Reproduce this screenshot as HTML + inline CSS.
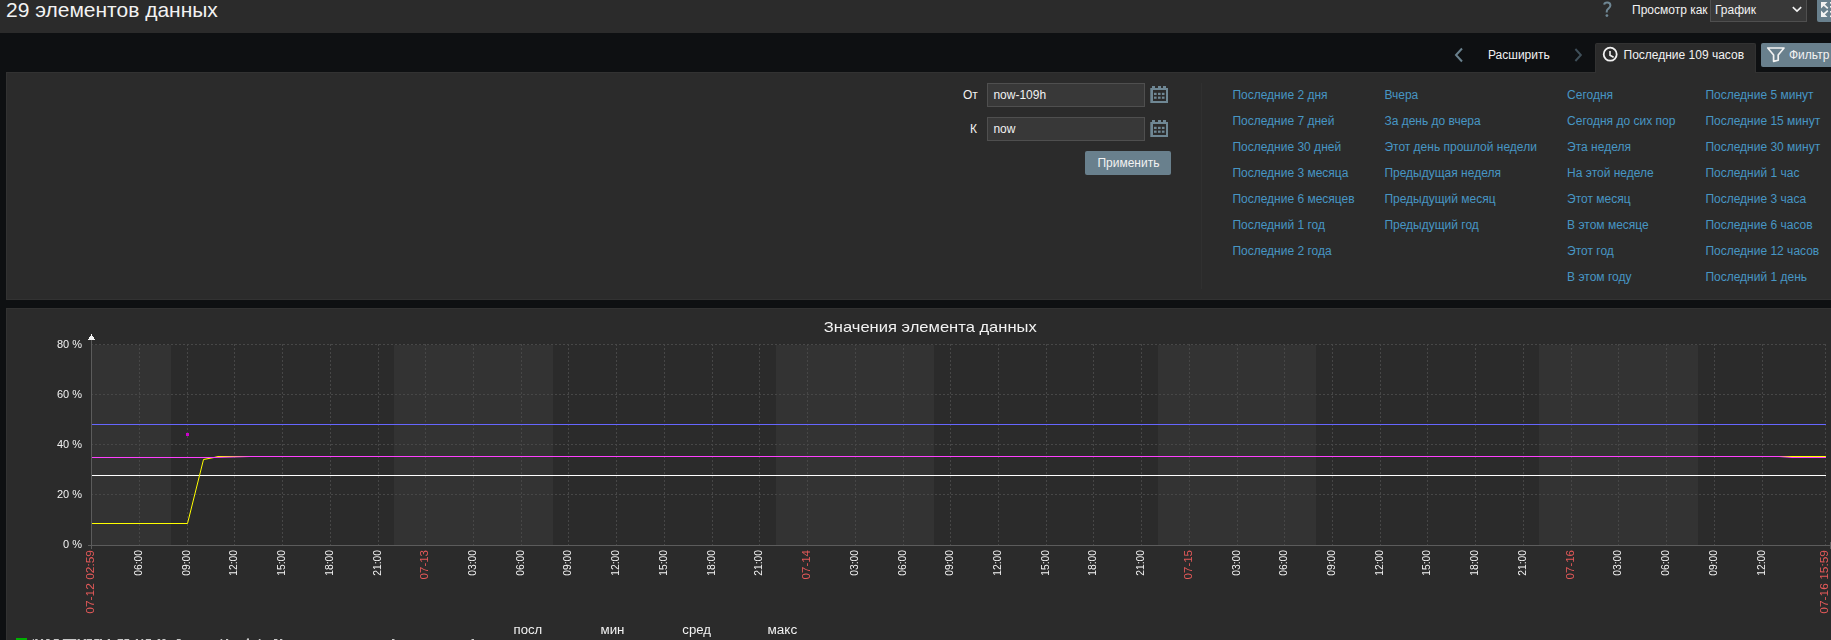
<!DOCTYPE html>
<html><head><meta charset="utf-8">
<style>
*{margin:0;padding:0;box-sizing:border-box}
html,body{width:1831px;height:640px;overflow:hidden;background:#0e1012;color:#f2f2f2;font-family:"Liberation Sans",sans-serif;font-size:12px}
.abs{position:absolute}
.t12{position:absolute;font-size:12px;line-height:14px;white-space:nowrap}
.lk{position:absolute;font-size:12px;line-height:14px;white-space:nowrap;color:#4796c4}
svg text{font-family:"Liberation Sans",sans-serif}
</style></head><body>
<div class="abs" style="left:0;top:0;width:1831px;height:33px;background:#2b2b2b"></div>
<div class="abs" style="left:6px;top:-2px;font-size:21px;line-height:24px;white-space:nowrap">29 элементов данных</div>
<!-- top right controls -->
<svg class="abs" style="left:1596px;top:0" width="20" height="20"><path d="M8.2 4.6 C8.4 3.1 9.6 2.6 11.2 2.6 C13.2 2.6 14.4 3.8 14.4 5.5 C14.4 7.6 12.2 8.4 11.1 10 C10.7 10.6 10.7 11.5 10.7 12.6" fill="none" stroke="#6f8794" stroke-width="2"/><circle cx="10.9" cy="15.6" r="1.4" fill="#6f8794"/></svg>
<div class="t12" style="left:1632px;top:3px">Просмотр как</div>
<div class="abs" style="left:1710px;top:-2px;width:97px;height:24px;background:#383838;border:1px solid #4f4f4f"></div>
<div class="t12" style="left:1715px;top:3px">График</div>
<svg class="abs" style="left:1790px;top:4px" width="14" height="12"><path d="M2.8 3.2 L7 7.2 L11.2 3.2" fill="none" stroke="#f2f2f2" stroke-width="1.6"/></svg>
<div class="abs" style="left:1817px;top:-2px;width:30px;height:24px;background:#69808d;border-radius:2px"></div>
<svg class="abs" style="left:1817px;top:0px" width="14" height="22"><path d="M4 2 H10.5 L4 8.5 Z M4 17 H10.5 L4 10.5 Z" fill="#f2f2f2"/><path d="M5.5 3.5 L10.8 8.3 M5.5 15.5 L10.8 10.7" stroke="#f2f2f2" stroke-width="1.7" fill="none"/><rect x="13" y="2" width="1" height="1.6" fill="#f2f2f2"/><rect x="13" y="6" width="1" height="1.6" fill="#f2f2f2"/><rect x="13" y="11" width="1" height="1.6" fill="#f2f2f2"/><rect x="13" y="15.5" width="1" height="1.6" fill="#f2f2f2"/></svg>
<!-- timeline nav -->
<svg class="abs" style="left:1450px;top:45px" width="20" height="20"><path d="M12 3.5 L6 10 L12 16.5" fill="none" stroke="#69808d" stroke-width="2"/></svg>
<div class="t12" style="left:1488px;top:48px">Расширить</div>
<svg class="abs" style="left:1568px;top:45px" width="20" height="20"><path d="M7.4 4 L12.9 10 L7.4 16" fill="none" stroke="#3f4f59" stroke-width="1.9"/></svg>
<div class="abs" style="left:1595px;top:43px;width:161px;height:30px;background:#2b2b2b;border:1px solid #323232;border-bottom:none;border-radius:2px 2px 0 0"></div>
<svg class="abs" style="left:1601px;top:45px" width="18" height="18"><circle cx="9.2" cy="9.2" r="6.5" fill="none" stroke="#f2f2f2" stroke-width="1.8"/><path d="M9 6 V10.2 L12.6 12.3" fill="none" stroke="#f2f2f2" stroke-width="1.6"/></svg>
<div class="t12" style="left:1623.5px;top:48px">Последние 109 часов</div>
<div class="abs" style="left:1761px;top:43px;width:90px;height:24px;background:#69808d;border-radius:2px"></div>
<svg class="abs" style="left:1765px;top:45px" width="22" height="20"><path d="M2.8 3 H19 L13.2 10 V15.2 L8.6 16.4 V10 Z" fill="none" stroke="#f2f2f2" stroke-width="1.7" stroke-linejoin="round"/></svg>
<div class="t12" style="left:1789px;top:48px">Фильтр</div>
<!-- filter container -->
<div class="abs" style="left:6px;top:72px;width:1840px;height:228px;background:#2b2b2b;border:1px solid #323232"></div>
<div class="abs" style="left:1596px;top:72px;width:159px;height:1px;background:#2b2b2b"></div>
<div class="t12" style="left:963px;top:88px">От</div>
<div class="abs" style="left:987px;top:83px;width:158px;height:24px;background:#383838;border:1px solid #4f4f4f"></div>
<div class="t12" style="left:993.4px;top:88px">now-109h</div>
<div class="t12" style="left:970px;top:122px">К</div>
<div class="abs" style="left:987px;top:117px;width:158px;height:24px;background:#383838;border:1px solid #4f4f4f"></div>
<div class="t12" style="left:993.4px;top:122px">now</div>
<svg class="abs" style="left:1150px;top:85px" width="19" height="19"><g fill="#6f8794"><rect x="2" y="1" width="3" height="2"/><rect x="8" y="1" width="3" height="2"/><rect x="13" y="1" width="3" height="2"/><path fill-rule="evenodd" d="M0.3 3 H18 V18 H0.3 Z M3 5 V16 H16 V5 Z"/><rect x="4" y="7.8" width="2.6" height="2.2"/><rect x="8" y="7.8" width="2.6" height="2.2"/><rect x="11.9" y="7.8" width="2.6" height="2.2"/><rect x="4" y="11.6" width="2.6" height="2.2"/><rect x="8" y="11.6" width="2.6" height="2.2"/><rect x="11.9" y="11.6" width="2.6" height="2.2"/></g></svg>
<svg class="abs" style="left:1150px;top:119px" width="19" height="19"><g fill="#6f8794"><rect x="2" y="1" width="3" height="2"/><rect x="8" y="1" width="3" height="2"/><rect x="13" y="1" width="3" height="2"/><path fill-rule="evenodd" d="M0.3 3 H18 V18 H0.3 Z M3 5 V16 H16 V5 Z"/><rect x="4" y="7.8" width="2.6" height="2.2"/><rect x="8" y="7.8" width="2.6" height="2.2"/><rect x="11.9" y="7.8" width="2.6" height="2.2"/><rect x="4" y="11.6" width="2.6" height="2.2"/><rect x="8" y="11.6" width="2.6" height="2.2"/><rect x="11.9" y="11.6" width="2.6" height="2.2"/></g></svg>
<div class="abs" style="left:1085px;top:151px;width:86px;height:24px;background:#69808d;border-radius:2px"></div>
<div class="t12" style="left:1097.4px;top:156px">Применить</div>
<div class="abs" style="left:1201px;top:83px;width:1px;height:206px;background:#303030"></div>
<a class="lk" style="left:1232.4px;top:87.75px">Последние 2 дня</a>
<a class="lk" style="left:1232.4px;top:113.75px">Последние 7 дней</a>
<a class="lk" style="left:1232.4px;top:139.75px">Последние 30 дней</a>
<a class="lk" style="left:1232.4px;top:165.75px">Последние 3 месяца</a>
<a class="lk" style="left:1232.4px;top:191.75px">Последние 6 месяцев</a>
<a class="lk" style="left:1232.4px;top:217.75px">Последний 1 год</a>
<a class="lk" style="left:1232.4px;top:243.75px">Последние 2 года</a>
<a class="lk" style="left:1384.4px;top:87.75px">Вчера</a>
<a class="lk" style="left:1384.4px;top:113.75px">За день до вчера</a>
<a class="lk" style="left:1384.4px;top:139.75px">Этот день прошлой недели</a>
<a class="lk" style="left:1384.4px;top:165.75px">Предыдущая неделя</a>
<a class="lk" style="left:1384.4px;top:191.75px">Предыдущий месяц</a>
<a class="lk" style="left:1384.4px;top:217.75px">Предыдущий год</a>
<a class="lk" style="left:1567.1px;top:87.75px">Сегодня</a>
<a class="lk" style="left:1567.1px;top:113.75px">Сегодня до сих пор</a>
<a class="lk" style="left:1567.1px;top:139.75px">Эта неделя</a>
<a class="lk" style="left:1567.1px;top:165.75px">На этой неделе</a>
<a class="lk" style="left:1567.1px;top:191.75px">Этот месяц</a>
<a class="lk" style="left:1567.1px;top:217.75px">В этом месяце</a>
<a class="lk" style="left:1567.1px;top:243.75px">Этот год</a>
<a class="lk" style="left:1567.1px;top:269.75px">В этом году</a>
<a class="lk" style="left:1705.4px;top:87.75px">Последние 5 минут</a>
<a class="lk" style="left:1705.4px;top:113.75px">Последние 15 минут</a>
<a class="lk" style="left:1705.4px;top:139.75px">Последние 30 минут</a>
<a class="lk" style="left:1705.4px;top:165.75px">Последний 1 час</a>
<a class="lk" style="left:1705.4px;top:191.75px">Последние 3 часа</a>
<a class="lk" style="left:1705.4px;top:217.75px">Последние 6 часов</a>
<a class="lk" style="left:1705.4px;top:243.75px">Последние 12 часов</a>
<a class="lk" style="left:1705.4px;top:269.75px">Последний 1 день</a>
<!-- chart container -->
<div class="abs" style="left:6px;top:308px;width:1840px;height:400px;background:#2b2b2b;border:1px solid #323232"></div>
<svg class="abs" style="left:0;top:0;will-change:transform" width="1831" height="640" shape-rendering="crispEdges">
<rect x="92" y="345" width="79" height="200" fill="#333333"/>
<rect x="394" y="345" width="159" height="200" fill="#333333"/>
<rect x="776" y="345" width="158" height="200" fill="#333333"/>
<rect x="1158" y="345" width="158" height="200" fill="#333333"/>
<rect x="1539" y="345" width="159" height="200" fill="#333333"/>
<line x1="91" y1="344.5" x2="1826" y2="344.5" stroke="#474747" stroke-dasharray="2 2"/>
<line x1="91" y1="394.5" x2="1826" y2="394.5" stroke="#474747" stroke-dasharray="2 2"/>
<line x1="91" y1="444.5" x2="1826" y2="444.5" stroke="#474747" stroke-dasharray="2 2"/>
<line x1="91" y1="494.5" x2="1826" y2="494.5" stroke="#474747" stroke-dasharray="2 2"/>
<line x1="139.5" y1="344" x2="139.5" y2="545" stroke="#474747" stroke-dasharray="2 2"/>
<line x1="187.5" y1="344" x2="187.5" y2="545" stroke="#474747" stroke-dasharray="2 2"/>
<line x1="234.5" y1="344" x2="234.5" y2="545" stroke="#474747" stroke-dasharray="2 2"/>
<line x1="282.5" y1="344" x2="282.5" y2="545" stroke="#474747" stroke-dasharray="2 2"/>
<line x1="330.5" y1="344" x2="330.5" y2="545" stroke="#474747" stroke-dasharray="2 2"/>
<line x1="378.5" y1="344" x2="378.5" y2="545" stroke="#474747" stroke-dasharray="2 2"/>
<line x1="425.5" y1="344" x2="425.5" y2="545" stroke="#474747" stroke-dasharray="2 2"/>
<line x1="473.5" y1="344" x2="473.5" y2="545" stroke="#474747" stroke-dasharray="2 2"/>
<line x1="521.5" y1="344" x2="521.5" y2="545" stroke="#474747" stroke-dasharray="2 2"/>
<line x1="568.5" y1="344" x2="568.5" y2="545" stroke="#474747" stroke-dasharray="2 2"/>
<line x1="616.5" y1="344" x2="616.5" y2="545" stroke="#474747" stroke-dasharray="2 2"/>
<line x1="664.5" y1="344" x2="664.5" y2="545" stroke="#474747" stroke-dasharray="2 2"/>
<line x1="712.5" y1="344" x2="712.5" y2="545" stroke="#474747" stroke-dasharray="2 2"/>
<line x1="759.5" y1="344" x2="759.5" y2="545" stroke="#474747" stroke-dasharray="2 2"/>
<line x1="807.5" y1="344" x2="807.5" y2="545" stroke="#474747" stroke-dasharray="2 2"/>
<line x1="855.5" y1="344" x2="855.5" y2="545" stroke="#474747" stroke-dasharray="2 2"/>
<line x1="903.5" y1="344" x2="903.5" y2="545" stroke="#474747" stroke-dasharray="2 2"/>
<line x1="950.5" y1="344" x2="950.5" y2="545" stroke="#474747" stroke-dasharray="2 2"/>
<line x1="998.5" y1="344" x2="998.5" y2="545" stroke="#474747" stroke-dasharray="2 2"/>
<line x1="1046.5" y1="344" x2="1046.5" y2="545" stroke="#474747" stroke-dasharray="2 2"/>
<line x1="1093.5" y1="344" x2="1093.5" y2="545" stroke="#474747" stroke-dasharray="2 2"/>
<line x1="1141.5" y1="344" x2="1141.5" y2="545" stroke="#474747" stroke-dasharray="2 2"/>
<line x1="1189.5" y1="344" x2="1189.5" y2="545" stroke="#474747" stroke-dasharray="2 2"/>
<line x1="1237.5" y1="344" x2="1237.5" y2="545" stroke="#474747" stroke-dasharray="2 2"/>
<line x1="1284.5" y1="344" x2="1284.5" y2="545" stroke="#474747" stroke-dasharray="2 2"/>
<line x1="1332.5" y1="344" x2="1332.5" y2="545" stroke="#474747" stroke-dasharray="2 2"/>
<line x1="1380.5" y1="344" x2="1380.5" y2="545" stroke="#474747" stroke-dasharray="2 2"/>
<line x1="1427.5" y1="344" x2="1427.5" y2="545" stroke="#474747" stroke-dasharray="2 2"/>
<line x1="1475.5" y1="344" x2="1475.5" y2="545" stroke="#474747" stroke-dasharray="2 2"/>
<line x1="1523.5" y1="344" x2="1523.5" y2="545" stroke="#474747" stroke-dasharray="2 2"/>
<line x1="1571.5" y1="344" x2="1571.5" y2="545" stroke="#474747" stroke-dasharray="2 2"/>
<line x1="1618.5" y1="344" x2="1618.5" y2="545" stroke="#474747" stroke-dasharray="2 2"/>
<line x1="1666.5" y1="344" x2="1666.5" y2="545" stroke="#474747" stroke-dasharray="2 2"/>
<line x1="1714.5" y1="344" x2="1714.5" y2="545" stroke="#474747" stroke-dasharray="2 2"/>
<line x1="1762.5" y1="344" x2="1762.5" y2="545" stroke="#474747" stroke-dasharray="2 2"/>
<line x1="1825.5" y1="344" x2="1825.5" y2="545" stroke="#474747" stroke-dasharray="2 2"/>
<line x1="91.5" y1="339" x2="91.5" y2="549" stroke="#5c5c5c"/>
<line x1="88" y1="545.5" x2="1831" y2="545.5" stroke="#5c5c5c"/>
<path d="M91.5 334 L95 340 L88 340 Z" fill="#f2f2f2"/>
<rect x="1830" y="542" width="1" height="7" fill="#5c5c5c"/>
<line x1="92" y1="424.5" x2="1826" y2="424.5" stroke="#6666ff"/>
<line x1="92" y1="475.5" x2="1826" y2="475.5" stroke="#ffffff"/>
<polyline points="92,523.5 187.5,523.5 203.5,459.5 214,457.5 218,456.5 1826,456.5" fill="none" stroke="#ffff00" shape-rendering="auto"/>
<polyline points="92,457.5 215,457.5 250,456.5 1779,456.5 1792,457.5 1826,457.5" fill="none" stroke="#ff40ff" shape-rendering="auto"/>
<rect x="186" y="433" width="3" height="3" fill="#cc00cc"/>
<text x="82" y="348" text-anchor="end" font-size="11" fill="#f2f2f2">80 %</text>
<text x="82" y="398" text-anchor="end" font-size="11" fill="#f2f2f2">60 %</text>
<text x="82" y="448" text-anchor="end" font-size="11" fill="#f2f2f2">40 %</text>
<text x="82" y="498" text-anchor="end" font-size="11" fill="#f2f2f2">20 %</text>
<text x="82" y="548" text-anchor="end" font-size="11" fill="#f2f2f2">0 %</text>
<text transform="translate(93.8,550) rotate(-90)" x="0" y="0" text-anchor="end" font-size="10" fill="#e45959" textLength="63.7" lengthAdjust="spacingAndGlyphs">07-12 02:59</text>
<text transform="translate(141.8,550) rotate(-90)" x="0" y="0" text-anchor="end" font-size="10" fill="#f2f2f2" textLength="25.8" lengthAdjust="spacingAndGlyphs">06:00</text>
<text transform="translate(189.8,550) rotate(-90)" x="0" y="0" text-anchor="end" font-size="10" fill="#f2f2f2" textLength="25.8" lengthAdjust="spacingAndGlyphs">09:00</text>
<text transform="translate(236.8,550) rotate(-90)" x="0" y="0" text-anchor="end" font-size="10" fill="#f2f2f2" textLength="25.8" lengthAdjust="spacingAndGlyphs">12:00</text>
<text transform="translate(284.8,550) rotate(-90)" x="0" y="0" text-anchor="end" font-size="10" fill="#f2f2f2" textLength="25.8" lengthAdjust="spacingAndGlyphs">15:00</text>
<text transform="translate(332.8,550) rotate(-90)" x="0" y="0" text-anchor="end" font-size="10" fill="#f2f2f2" textLength="25.8" lengthAdjust="spacingAndGlyphs">18:00</text>
<text transform="translate(380.8,550) rotate(-90)" x="0" y="0" text-anchor="end" font-size="10" fill="#f2f2f2" textLength="25.8" lengthAdjust="spacingAndGlyphs">21:00</text>
<text transform="translate(427.8,550) rotate(-90)" x="0" y="0" text-anchor="end" font-size="10" fill="#e45959" textLength="29.4" lengthAdjust="spacingAndGlyphs">07-13</text>
<text transform="translate(475.8,550) rotate(-90)" x="0" y="0" text-anchor="end" font-size="10" fill="#f2f2f2" textLength="25.8" lengthAdjust="spacingAndGlyphs">03:00</text>
<text transform="translate(523.8,550) rotate(-90)" x="0" y="0" text-anchor="end" font-size="10" fill="#f2f2f2" textLength="25.8" lengthAdjust="spacingAndGlyphs">06:00</text>
<text transform="translate(570.8,550) rotate(-90)" x="0" y="0" text-anchor="end" font-size="10" fill="#f2f2f2" textLength="25.8" lengthAdjust="spacingAndGlyphs">09:00</text>
<text transform="translate(618.8,550) rotate(-90)" x="0" y="0" text-anchor="end" font-size="10" fill="#f2f2f2" textLength="25.8" lengthAdjust="spacingAndGlyphs">12:00</text>
<text transform="translate(666.8,550) rotate(-90)" x="0" y="0" text-anchor="end" font-size="10" fill="#f2f2f2" textLength="25.8" lengthAdjust="spacingAndGlyphs">15:00</text>
<text transform="translate(714.8,550) rotate(-90)" x="0" y="0" text-anchor="end" font-size="10" fill="#f2f2f2" textLength="25.8" lengthAdjust="spacingAndGlyphs">18:00</text>
<text transform="translate(761.8,550) rotate(-90)" x="0" y="0" text-anchor="end" font-size="10" fill="#f2f2f2" textLength="25.8" lengthAdjust="spacingAndGlyphs">21:00</text>
<text transform="translate(809.8,550) rotate(-90)" x="0" y="0" text-anchor="end" font-size="10" fill="#e45959" textLength="29.4" lengthAdjust="spacingAndGlyphs">07-14</text>
<text transform="translate(857.8,550) rotate(-90)" x="0" y="0" text-anchor="end" font-size="10" fill="#f2f2f2" textLength="25.8" lengthAdjust="spacingAndGlyphs">03:00</text>
<text transform="translate(905.8,550) rotate(-90)" x="0" y="0" text-anchor="end" font-size="10" fill="#f2f2f2" textLength="25.8" lengthAdjust="spacingAndGlyphs">06:00</text>
<text transform="translate(952.8,550) rotate(-90)" x="0" y="0" text-anchor="end" font-size="10" fill="#f2f2f2" textLength="25.8" lengthAdjust="spacingAndGlyphs">09:00</text>
<text transform="translate(1000.8,550) rotate(-90)" x="0" y="0" text-anchor="end" font-size="10" fill="#f2f2f2" textLength="25.8" lengthAdjust="spacingAndGlyphs">12:00</text>
<text transform="translate(1048.8,550) rotate(-90)" x="0" y="0" text-anchor="end" font-size="10" fill="#f2f2f2" textLength="25.8" lengthAdjust="spacingAndGlyphs">15:00</text>
<text transform="translate(1095.8,550) rotate(-90)" x="0" y="0" text-anchor="end" font-size="10" fill="#f2f2f2" textLength="25.8" lengthAdjust="spacingAndGlyphs">18:00</text>
<text transform="translate(1143.8,550) rotate(-90)" x="0" y="0" text-anchor="end" font-size="10" fill="#f2f2f2" textLength="25.8" lengthAdjust="spacingAndGlyphs">21:00</text>
<text transform="translate(1191.8,550) rotate(-90)" x="0" y="0" text-anchor="end" font-size="10" fill="#e45959" textLength="29.4" lengthAdjust="spacingAndGlyphs">07-15</text>
<text transform="translate(1239.8,550) rotate(-90)" x="0" y="0" text-anchor="end" font-size="10" fill="#f2f2f2" textLength="25.8" lengthAdjust="spacingAndGlyphs">03:00</text>
<text transform="translate(1286.8,550) rotate(-90)" x="0" y="0" text-anchor="end" font-size="10" fill="#f2f2f2" textLength="25.8" lengthAdjust="spacingAndGlyphs">06:00</text>
<text transform="translate(1334.8,550) rotate(-90)" x="0" y="0" text-anchor="end" font-size="10" fill="#f2f2f2" textLength="25.8" lengthAdjust="spacingAndGlyphs">09:00</text>
<text transform="translate(1382.8,550) rotate(-90)" x="0" y="0" text-anchor="end" font-size="10" fill="#f2f2f2" textLength="25.8" lengthAdjust="spacingAndGlyphs">12:00</text>
<text transform="translate(1429.8,550) rotate(-90)" x="0" y="0" text-anchor="end" font-size="10" fill="#f2f2f2" textLength="25.8" lengthAdjust="spacingAndGlyphs">15:00</text>
<text transform="translate(1477.8,550) rotate(-90)" x="0" y="0" text-anchor="end" font-size="10" fill="#f2f2f2" textLength="25.8" lengthAdjust="spacingAndGlyphs">18:00</text>
<text transform="translate(1525.8,550) rotate(-90)" x="0" y="0" text-anchor="end" font-size="10" fill="#f2f2f2" textLength="25.8" lengthAdjust="spacingAndGlyphs">21:00</text>
<text transform="translate(1573.8,550) rotate(-90)" x="0" y="0" text-anchor="end" font-size="10" fill="#e45959" textLength="29.4" lengthAdjust="spacingAndGlyphs">07-16</text>
<text transform="translate(1620.8,550) rotate(-90)" x="0" y="0" text-anchor="end" font-size="10" fill="#f2f2f2" textLength="25.8" lengthAdjust="spacingAndGlyphs">03:00</text>
<text transform="translate(1668.8,550) rotate(-90)" x="0" y="0" text-anchor="end" font-size="10" fill="#f2f2f2" textLength="25.8" lengthAdjust="spacingAndGlyphs">06:00</text>
<text transform="translate(1716.8,550) rotate(-90)" x="0" y="0" text-anchor="end" font-size="10" fill="#f2f2f2" textLength="25.8" lengthAdjust="spacingAndGlyphs">09:00</text>
<text transform="translate(1764.8,550) rotate(-90)" x="0" y="0" text-anchor="end" font-size="10" fill="#f2f2f2" textLength="25.8" lengthAdjust="spacingAndGlyphs">12:00</text>
<text transform="translate(1827.8,550) rotate(-90)" x="0" y="0" text-anchor="end" font-size="10" fill="#e45959" textLength="63.7" lengthAdjust="spacingAndGlyphs">07-16 15:59</text>
<text x="823.8" y="331.5" font-size="14.5" fill="#f2f2f2" textLength="213" lengthAdjust="spacingAndGlyphs">Значения элемента данных</text>
<text x="513.6" y="634" font-size="12" fill="#f2f2f2" textLength="28.7" lengthAdjust="spacingAndGlyphs">посл</text>
<text x="600.5" y="634" font-size="12" fill="#f2f2f2" textLength="24" lengthAdjust="spacingAndGlyphs">мин</text>
<text x="682.3" y="634" font-size="12" fill="#f2f2f2" textLength="28.7" lengthAdjust="spacingAndGlyphs">сред</text>
<text x="767.5" y="634" font-size="12" fill="#f2f2f2" textLength="29.7" lengthAdjust="spacingAndGlyphs">макс</text>
<rect x="16" y="638" width="11" height="10" fill="#00b000"/>
<rect x="32.8" y="639" width="1.1" height="1" fill="#c8c8c8" shape-rendering="auto"/>
<rect x="35.2" y="639" width="2.4" height="1" fill="#c8c8c8" shape-rendering="auto"/>
<rect x="40.9" y="639" width="2.2" height="1" fill="#c8c8c8" shape-rendering="auto"/>
<rect x="46.2" y="639" width="3.4" height="1" fill="#c8c8c8" shape-rendering="auto"/>
<rect x="53.8" y="639" width="5.0" height="1" fill="#c8c8c8" shape-rendering="auto"/>
<rect x="62.8" y="639" width="13.5" height="1" fill="#c8c8c8" shape-rendering="auto"/>
<rect x="77.6" y="639" width="2.2" height="1" fill="#c8c8c8" shape-rendering="auto"/>
<rect x="83.7" y="639" width="2.6" height="1" fill="#c8c8c8" shape-rendering="auto"/>
<rect x="86.8" y="639" width="5.2" height="1" fill="#c8c8c8" shape-rendering="auto"/>
<rect x="94.2" y="639" width="5.2" height="1" fill="#c8c8c8" shape-rendering="auto"/>
<rect x="99.9" y="639" width="2.1" height="1" fill="#c8c8c8" shape-rendering="auto"/>
<rect x="107.7" y="639" width="2.3" height="1" fill="#c8c8c8" shape-rendering="auto"/>
<rect x="117.6" y="639" width="5.5" height="1" fill="#c8c8c8" shape-rendering="auto"/>
<rect x="124.4" y="639" width="4.8" height="1" fill="#c8c8c8" shape-rendering="auto"/>
<rect x="135.8" y="639" width="2.2" height="1" fill="#c8c8c8" shape-rendering="auto"/>
<rect x="141.4" y="639" width="1.8" height="1" fill="#c8c8c8" shape-rendering="auto"/>
<rect x="145.8" y="639" width="5.2" height="1" fill="#c8c8c8" shape-rendering="auto"/>
<rect x="157.6" y="639" width="2.6" height="1" fill="#c8c8c8" shape-rendering="auto"/>
<rect x="162.4" y="639" width="3.1" height="1" fill="#c8c8c8" shape-rendering="auto"/>
<rect x="176.8" y="639" width="3.9" height="1" fill="#c8c8c8" shape-rendering="auto"/>
<rect x="220.6" y="639" width="1.6" height="1" fill="#c8c8c8" shape-rendering="auto"/>
<rect x="226.0" y="639" width="2.2" height="1" fill="#c8c8c8" shape-rendering="auto"/>
<rect x="246.8" y="639" width="2.2" height="1" fill="#c8c8c8" shape-rendering="auto"/>
<rect x="258.8" y="639" width="1.7" height="1" fill="#c8c8c8" shape-rendering="auto"/>
<rect x="274.0" y="639" width="3.4" height="1" fill="#c8c8c8" shape-rendering="auto"/>
<rect x="280.0" y="639" width="2.3" height="1" fill="#c8c8c8" shape-rendering="auto"/>
<rect x="392.0" y="639" width="2.5" height="1" fill="#c8c8c8" shape-rendering="auto"/>
<rect x="471.5" y="639" width="2.5" height="1" fill="#c8c8c8" shape-rendering="auto"/>
<rect x="247" y="638" width="2" height="1" fill="#888888"/>
</svg>
</body></html>
